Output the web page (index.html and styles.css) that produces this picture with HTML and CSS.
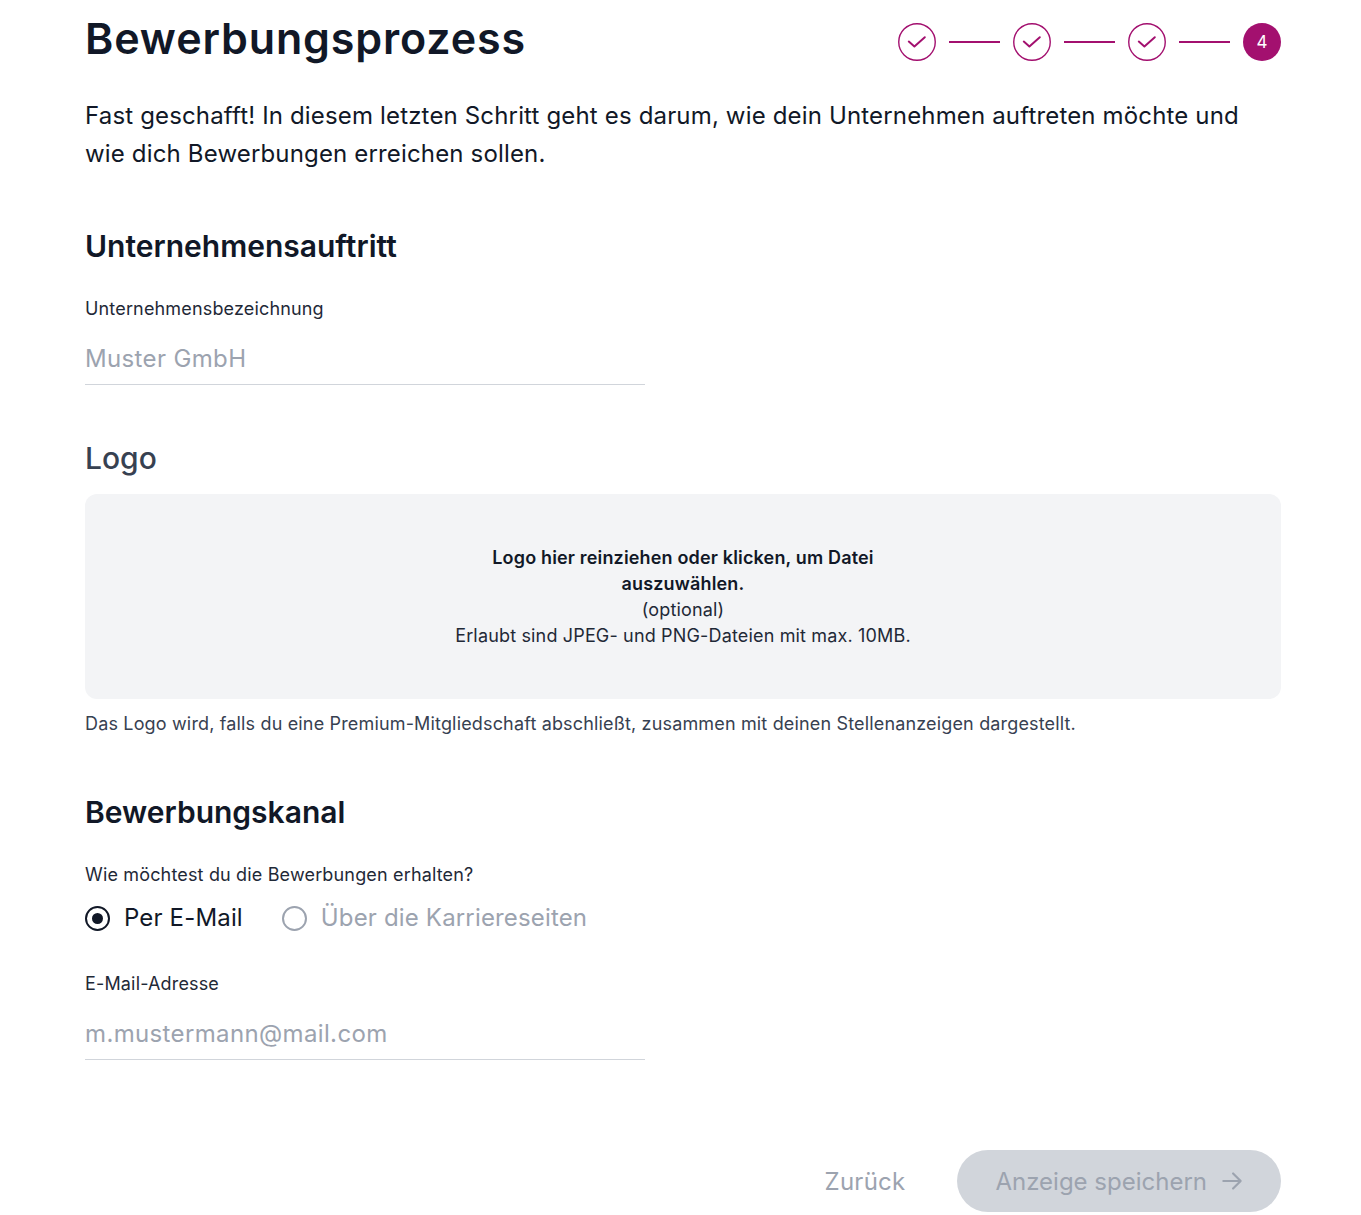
FILE: index.html
```html
<!DOCTYPE html>
<html lang="de">
<head>
<meta charset="utf-8">
<title>Bewerbungsprozess</title>
<link rel="stylesheet" href="styles.css">
</head>
<body>
<main class="page">
  <header class="top">
    <h1 class="title">Bewerbungsprozess</h1>
    <ol class="stepper">
      <li class="step step-done"><svg viewBox="0 0 38 38" width="38" height="38"><circle cx="19" cy="19" r="18.25" fill="none" stroke="currentColor" stroke-width="1.4"/><path d="M10.8 18.6 L16.4 23.4 L26.8 14.2" fill="none" stroke="currentColor" stroke-width="2" stroke-linecap="round" stroke-linejoin="round"/></svg></li>
      <li class="step-line"></li>
      <li class="step step-done"><svg viewBox="0 0 38 38" width="38" height="38"><circle cx="19" cy="19" r="18.25" fill="none" stroke="currentColor" stroke-width="1.4"/><path d="M10.8 18.6 L16.4 23.4 L26.8 14.2" fill="none" stroke="currentColor" stroke-width="2" stroke-linecap="round" stroke-linejoin="round"/></svg></li>
      <li class="step-line"></li>
      <li class="step step-done"><svg viewBox="0 0 38 38" width="38" height="38"><circle cx="19" cy="19" r="18.25" fill="none" stroke="currentColor" stroke-width="1.4"/><path d="M10.8 18.6 L16.4 23.4 L26.8 14.2" fill="none" stroke="currentColor" stroke-width="2" stroke-linecap="round" stroke-linejoin="round"/></svg></li>
      <li class="step-line"></li>
      <li class="step step-current">4</li>
    </ol>
  </header>

  <p class="intro">Fast geschafft! In diesem letzten Schritt geht es darum, wie dein Unternehmen auftreten möchte und wie dich Bewerbungen erreichen sollen.</p>

  <section class="section section-company">
    <h2 class="heading">Unternehmensauftritt</h2>
    <label class="field">
      <span class="label">Unternehmensbezeichnung</span>
      <input class="input" type="text" placeholder="Muster GmbH">
    </label>
  </section>

  <section class="section section-logo">
    <h2 class="heading heading-muted">Logo</h2>
    <div class="dropzone">
      <div class="dropzone-text">
        <p class="drop-main">Logo hier reinziehen oder klicken, um Datei auszuwählen.</p>
        <p class="drop-line">(optional)</p>
        <p class="drop-line">Erlaubt sind JPEG- und PNG-Dateien mit max. 10MB.</p>
      </div>
    </div>
    <p class="hint">Das Logo wird, falls du eine Premium-Mitgliedschaft abschließt, zusammen mit deinen Stellenanzeigen dargestellt.</p>
  </section>

  <section class="section section-channel">
    <h2 class="heading">Bewerbungskanal</h2>
    <p class="label question">Wie möchtest du die Bewerbungen erhalten?</p>
    <div class="radios">
      <label class="radio radio-on"><span class="radio-dot"></span><span>Per E-Mail</span></label>
      <label class="radio radio-off"><span class="radio-dot"></span><span>Über die Karriereseiten</span></label>
    </div>
    <label class="field field-mail">
      <span class="label">E-Mail-Adresse</span>
      <input class="input" type="text" placeholder="m.mustermann@mail.com">
    </label>
  </section>

  <footer class="actions">
    <button class="btn-back" type="button">Zurück</button>
    <button class="btn-save" type="button">Anzeige speichern
      <svg viewBox="0 0 24 24" width="26" height="26"><path d="M4 12 H20 M13 5 L20 12 L13 19" fill="none" stroke="currentColor" stroke-width="2" stroke-linecap="round" stroke-linejoin="round"/></svg>
    </button>
  </footer>
</main>
</body>
</html>
```

FILE: styles.css
```css
* { box-sizing: border-box; }

html, body {
  margin: 0;
  background: #ffffff;
}

body {
  font-family: "Inter", "Lato", sans-serif;
  color: #111827;
  letter-spacing: 0.01em;
}

.page {
  width: 1196px;
  margin-left: 85px;
  padding-top: 13px;
}

p { margin: 0; }

.top {
  display: flex;
  justify-content: space-between;
  align-items: flex-start;
}

.title {
  margin: 0;
  font-size: 43px;
  line-height: 50px;
  font-weight: 600;
  letter-spacing: 0.02em;
  color: #111827;
}

.stepper {
  list-style: none;
  margin: 10px 0 0;
  padding: 0;
  display: flex;
  align-items: center;
  gap: 13px;
}

.step {
  width: 38px;
  height: 38px;
  display: flex;
  align-items: center;
  justify-content: center;
  color: #a3106f;
}

.step svg { display: block; }

.step-current {
  background: #a3106f;
  border-radius: 50%;
  color: #ffffff;
  font-size: 17px;
  font-weight: 400;
}

.step-line {
  width: 51px;
  height: 1.5px;
  background: #a3106f;
}

.intro {
  margin-top: 34px;
  font-size: 24px;
  line-height: 38px;
  color: #111827;
}

.section-company { margin-top: 55px; }
.section-logo { margin-top: 55px; }
.section-channel { margin-top: 58px; }

.heading {
  margin: 0;
  font-size: 30px;
  line-height: 36px;
  font-weight: 600;
  letter-spacing: 0;
  color: #111827;
}

.heading-muted {
  font-weight: 500;
  color: #374151;
}

.field {
  display: flex;
  flex-direction: column;
  width: 560px;
  margin-top: 33px;
}

.label {
  font-size: 18px;
  line-height: 24px;
  color: #1f2937;
}

.input {
  margin-top: 16px;
  border: 0;
  border-bottom: 1px solid #d1d5db;
  padding: 8px 0 11px;
  font-family: inherit;
  font-size: 24px;
  line-height: 28px;
  letter-spacing: 0.015em;
  color: #111827;
  outline: none;
  background: transparent;
}

.input::placeholder { color: #9ca3af; }

.dropzone {
  margin-top: 18px;
  min-height: 205px;
  background: #f3f4f6;
  border-radius: 12px;
  display: flex;
  align-items: center;
  justify-content: center;
  text-align: center;
}

.dropzone-text {
  font-size: 18px;
  line-height: 26px;
  color: #1f2937;
}

.drop-main {
  font-weight: 600;
  max-width: 420px;
  margin: 0 auto;
  color: #111827;
}

.hint {
  margin-top: 13px;
  font-size: 18px;
  line-height: 24px;
  color: #374151;
}

.question { margin-top: 33px; }

.radios {
  margin-top: 15px;
  display: flex;
  gap: 39px;
  height: 32px;
  align-items: center;
}

.radio {
  display: flex;
  align-items: center;
  gap: 14px;
  font-size: 24px;
  line-height: 32px;
}

.radio-dot {
  width: 25px;
  height: 25px;
  border-radius: 50%;
  border: 2px solid currentColor;
  display: flex;
  align-items: center;
  justify-content: center;
}

.radio-on { color: #111827; }
.radio-on .radio-dot::after {
  content: "";
  width: 11px;
  height: 11px;
  border-radius: 50%;
  background: #111827;
}

.radio-off { color: #9ca3af; }

.field-mail { margin-top: 38px; }

.actions {
  margin-top: 90px;
  display: flex;
  justify-content: flex-end;
  align-items: center;
  gap: 52px;
}

.btn-back {
  border: 0;
  background: transparent;
  padding: 0;
  font-family: inherit;
  font-size: 24px;
  letter-spacing: 0.01em;
  color: #9ca3af;
}

.btn-save {
  border: 0;
  height: 62px;
  border-radius: 31px;
  background: #d1d5db;
  padding: 0 36px 0 38px;
  display: flex;
  align-items: center;
  gap: 12px;
  font-family: inherit;
  font-size: 24px;
  letter-spacing: 0;
  color: #9ca3af;
}

.btn-save svg { display: block; }
```
